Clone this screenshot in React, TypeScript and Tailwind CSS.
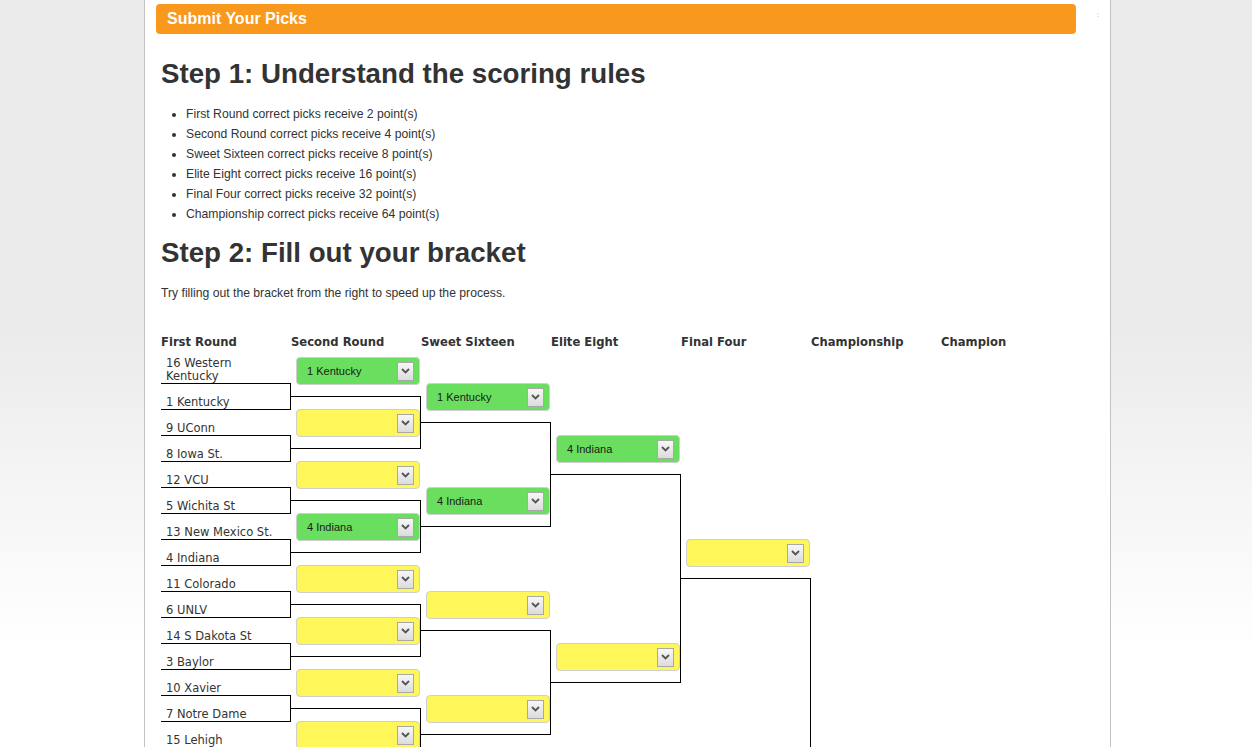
import React from 'react';

const RULES = [
	'First Round correct picks receive 2 point(s)',
	'Second Round correct picks receive 4 point(s)',
	'Sweet Sixteen correct picks receive 8 point(s)',
	'Elite Eight correct picks receive 16 point(s)',
	'Final Four correct picks receive 32 point(s)',
	'Championship correct picks receive 64 point(s)',
];

const HEADERS = ['First Round', 'Second Round', 'Sweet Sixteen', 'Elite Eight', 'Final Four', 'Championship', 'Champion'];

const TEAMS = [
	'16 Western Kentucky', '1 Kentucky', '9 UConn', '8 Iowa St.', '12 VCU', '5 Wichita St', '13 New Mexico St.', '4 Indiana',
	'11 Colorado', '6 UNLV', '14 S Dakota St', '3 Baylor', '10 Xavier', '7 Notre Dame', '15 Lehigh', '2 Duke',
	'16 LIU Brooklyn', '1 Michigan St', '9 Saint Louis', '8 Memphis', '12 Long Beach St', '5 New Mexico', '13 Davidson', '4 Louisville',
	'11 Colorado St', '6 Murray St', '14 BYU', '3 Marquette', '10 Virginia', '7 Florida', '15 Norfolk St', '2 Missouri',
];

// hand-tuned spacing per round, slot height = 26 * 2^round
const ROUNDS = [
	{ picks: ['1 Kentucky', '', '', '4 Indiana', '', '', '', '', '', '', '', '', '', '', '', ''], pair: 'h-[104px]', pre: 'h-0', box: 'h-[53px] pt-[12px]' },
	{ picks: ['1 Kentucky', '4 Indiana', '', '', '', '', '', ''], pair: 'h-[208px]', pre: 'h-[26px]', box: 'h-[105px] pt-[64px]' },
	{ picks: ['4 Indiana', '', '', ''], pair: 'h-[416px]', pre: 'h-[78px]', box: 'h-[209px] pt-[168px]' },
	{ picks: ['', ''], pair: 'h-[832px]', pre: 'h-[182px]', box: 'h-[417px] pt-[376px]' },
];

const Chevron: React.FC = () => (
	<svg width="9" height="6" viewBox="0 0 9 6" fill="none">
		<path d="M1 1l3.5 3.5L8 1" stroke="#555" strokeWidth="1.8" />
	</svg>
);

const Pick: React.FC<{ team: string }> = ({ team }) => (
	<div className={`ml-[5px] flex h-[28px] w-[124px] shrink-0 items-center justify-between rounded-[4px] border border-[#cfcfcf] pl-[10px] pr-[5px] font-['Liberation_Sans',Arial,sans-serif] text-[11px] text-[#1a1a1a] ${team ? 'bg-[#6ade5f]' : 'bg-[#fff759]'}`}>
		<span>{team}</span>
		<span className="flex h-[19px] w-[17px] items-center justify-center border border-[#a8a8a8] bg-linear-to-b from-[#f7f7f7] to-[#dcdcdc]">
			<Chevron />
		</span>
	</div>
);

const RoundColumn: React.FC<{ round: typeof ROUNDS[number] }> = ({ round }) => {
	const pairs: string[][] = [];
	for (let i = 0; i < round.picks.length; i += 2) {
		pairs.push([round.picks[i], round.picks[i + 1]]);
	}
	return (
		<div className="w-[130px]">
			{pairs.map((pair, i) => (
				<div key={i} className={`flex flex-col ${round.pair}`}>
					<div className={round.pre} />
					<Pick team={pair[0]} />
					<div className={`mt-[11px] border-y border-r border-black ${round.box}`}>
						<Pick team={pair[1]} />
					</div>
				</div>
			))}
		</div>
	);
};

const App: React.FC = () => {
	return (
		<div className="min-h-screen bg-[linear-gradient(#ebebeb_330px,#ffffff_650px)] font-['Liberation_Sans',Arial,sans-serif] text-[#333]">
			<div className="ml-[144px] w-[967px] border-x border-[#c2c2c2] bg-white pt-[4px] pb-[40px]">
				<div className="flex h-[30px] items-start">
					<div className="ml-[11px] flex h-[30px] w-[920px] items-center rounded-[4px] bg-[#f8981d] pl-[11px] text-[16px] font-bold text-white">
						Submit Your Picks
					</div>
					<span className="ml-[21px] mt-[6px] text-[8px] leading-[10px] text-[#f8981d]">:</span>
				</div>
				<div className="px-[16px]">
					<h1 className="mt-[24px] text-[27.7px] leading-[32px] font-bold">
						Step 1: Understand the scoring rules
					</h1>
					<ul className="mt-[14px] list-disc pl-[25px] text-[12.2px] leading-[20px]">
						{RULES.map((rule) => (
							<li key={rule}>{rule}</li>
						))}
					</ul>
					<h2 className="mt-[13px] text-[27.7px] leading-[32px] font-bold">
						Step 2: Fill out your bracket
					</h2>
					<p className="mt-[16px] text-[12.2px] leading-[16px]">
						Try filling out the bracket from the right to speed up the process.
					</p>
					<div className="mt-[32px] flex h-[16px] font-['DejaVu_Sans',Verdana,sans-serif] text-[11.6px] leading-[18px] font-bold">
						{HEADERS.map((h) => (
							<div key={h} className="w-[130px]">{h}</div>
						))}
					</div>
					<div className="mt-[8px] flex items-start">
						<div className="w-[130px] pt-px font-['DejaVu_Sans',Verdana,sans-serif] text-[11.5px]">
							{TEAMS.map((team, i) => (
								<div key={team} className={`flex h-[26px] items-end border-b border-black pl-[5px] ${i % 2 ? 'border-r' : ''}`}>
									<span className="max-w-[112px] leading-[13px]">{team}</span>
								</div>
							))}
						</div>
						{ROUNDS.map((round, i) => (
							<RoundColumn key={i} round={round} />
						))}
						<div className="flex w-[130px] flex-col">
							<div className="h-[390px]" />
							<Pick team="" />
							<div className="mt-[11px] border-t border-black" />
						</div>
						<div className="w-[130px]" />
					</div>
				</div>
			</div>
		</div>
	);
};

export default App;
